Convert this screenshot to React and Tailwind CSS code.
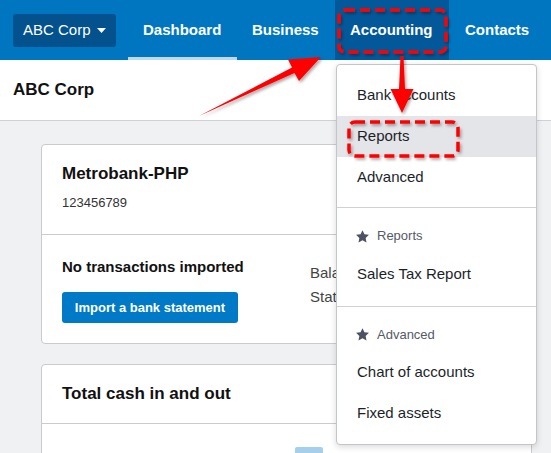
import React from "react";

function Star() {
  return (
    <svg width="15" height="15" viewBox="0 0 24 24" className="shrink-0">
      <path
        d="M12 1.8l3.1 6.6 7.2.9-5.3 5 1.4 7.1L12 17.9l-6.4 3.5L7 14.3l-5.3-5 7.2-.9z"
        fill="#4c5163"
      />
    </svg>
  );
}

function Item({ children, active }) {
  return (
    <div
      className={
        "h-[41px] flex items-center pl-[20px] text-[15px] text-[#1c1f2a] " +
        (active ? "bg-[#e4e5e8]" : "")
      }
    >
      {children}
    </div>
  );
}

function Header({ children, h }) {
  return (
    <div className={"flex items-center pl-[18px] gap-[7px] text-[13px] text-[#555a68] " + h}>
      <Star />
      <span>{children}</span>
    </div>
  );
}

export default function App() {
  return (
    <div className="relative w-[551px] h-[453px] overflow-hidden bg-[#f0f1f3] font-['Liberation_Sans',Arial,sans-serif]">
      {/* Top nav */}
      <div className="h-[60px] bg-[#0076c1] flex items-stretch">
        <div className="flex items-center pl-[13px]">
          <div className="h-[33px] w-[103px] rounded-[3px] bg-[#03528d] flex items-center pl-[10px] text-white text-[15px]">
            <span>ABC Corp</span>
            <svg width="9" height="5" viewBox="0 0 9 5" className="ml-[6px]">
              <path d="M0 0h9L4.5 5z" fill="white" />
            </svg>
          </div>
        </div>
        <div className="ml-[12px] flex items-stretch text-white text-[15px] font-bold">
          <div className="relative w-[109px] px-[15px] flex items-center">
            Dashboard
            <div className="absolute left-0 right-0 bottom-0 h-[3px] bg-[#bcd9ee]" />
          </div>
          <div className="w-[98px] px-[15px] flex items-center">Business</div>
          <div className="px-[15px] w-[114px] flex items-center bg-[#03589a]">
            Accounting
          </div>
          <div className="px-[16px] flex items-center">Contacts</div>
        </div>
      </div>

      {/* Page header */}
      <div className="h-[61px] bg-white border-b border-[#cfd1d5] flex items-center pl-[13px]">
        <span className="text-[17px] font-bold text-[#111]">ABC Corp</span>
      </div>

      {/* Content */}
      <div className="ml-[41px] mr-[19px] pt-[23px] flex flex-col gap-[20px]">
        <div className="bg-white border border-[#c9cbd0] rounded-[4px]">
          <div className="h-[90px] pl-[20px] pt-[19px] border-b border-[#c9cbd0]">
            <div className="text-[17px] leading-[20px] font-bold text-[#111]">
              Metrobank-PHP
            </div>
            <div className="mt-[11px] text-[13px] leading-[16px] text-[#333]">
              123456789
            </div>
          </div>
          <div className="flex pl-[20px] pt-[23px] pb-[20px]">
            <div className="w-[248px]">
              <div className="text-[15px] leading-[18px] font-bold text-[#111]">
                No transactions imported
              </div>
              <div className="mt-[16px] h-[31px] w-[176px] rounded-[3px] bg-[#0079c6] flex items-center justify-center text-white text-[13px] font-bold">
                Import a bank statement
              </div>
            </div>
            <div className="pt-[3px] text-[15px] leading-[24px] text-[#444]">
              <div>Balance</div>
              <div>Statement</div>
            </div>
          </div>
        </div>

        <div className="bg-white border border-[#c9cbd0] rounded-[4px] h-[120px]">
          <div className="h-[59px] pl-[20px] flex items-center border-b border-[#c9cbd0]">
            <span className="text-[17px] font-bold text-[#111]">
              Total cash in and out
            </span>
          </div>
          <div className="pl-[253px] pt-[23px]">
            <div className="w-[28px] h-[10px] rounded-t-[2px] bg-[#a6cfec]" />
          </div>
        </div>
      </div>

      {/* Dropdown */}
      <div className="absolute left-[336px] top-[64px] w-[201px] bg-white border border-[#c3c5ca] rounded-[4px] shadow-[0_2px_6px_rgba(0,0,0,0.15)] z-10">
        <div className="pt-[10px] pb-[9px]">
          <Item>Bank accounts</Item>
          <Item active>Reports</Item>
          <Item>Advanced</Item>
        </div>
        <div className="border-t border-[#cfd1d5] pt-[10px] pb-[11px]">
          <Header h="h-[36px]">Reports</Header>
          <Item>Sales Tax Report</Item>
        </div>
        <div className="border-t border-[#cfd1d5] py-[10px]">
          <Header h="h-[35px]">Advanced</Header>
          <Item>Chart of accounts</Item>
          <Item>Fixed assets</Item>
        </div>
      </div>

      {/* Annotations */}
      <svg
        className="absolute left-0 top-0 z-20 pointer-events-none"
        width="551"
        height="453"
        viewBox="0 0 551 453"
      >
        <defs>
          <filter id="sh" x="-20%" y="-20%" width="140%" height="140%">
            <feDropShadow dx="1.5" dy="2" stdDeviation="1.5" floodColor="#000" floodOpacity="0.35" />
          </filter>
        </defs>
        <g filter="url(#sh)">
          <rect x="339" y="10" width="107" height="42" rx="6" fill="none" stroke="#ff0000" strokeWidth="3.5" strokeDasharray="10 5" />
          <rect x="349" y="122" width="109" height="34" rx="6" fill="none" stroke="#ff0000" strokeWidth="3.5" strokeDasharray="10 5" />
          <polygon
            points="199,116 292,67.5 288,59.5 321,57 299,81 294.5,73"
            fill="#ff0000"
          />
          <polygon
            points="400.5,56 403.5,56 405,89 413.5,89 402,113 390.5,89 399,89"
            fill="#ff0000"
          />
        </g>
      </svg>
    </div>
  );
}
